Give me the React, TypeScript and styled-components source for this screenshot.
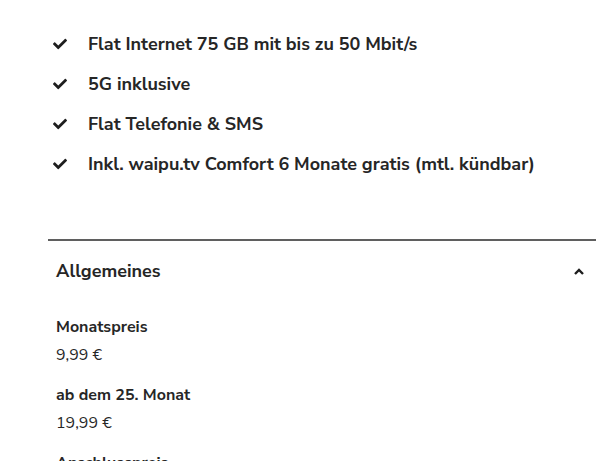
import React from "react";
import styled, { createGlobalStyle } from "styled-components";
import { FaCheck } from "react-icons/fa";

const Global = createGlobalStyle`
  html, body { margin: 0; padding: 0; background: #fff; }
  body { font-family: "Nunito Sans", Lato, "Open Sans", sans-serif; color: #262626; }
`;

const Page = styled.div`
  width: 608px;
  height: 461px;
  overflow: hidden;
  padding: 0 12px 0 48px;
  box-sizing: border-box;
`;

const List = styled.ul`
  list-style: none;
  margin: 0;
  padding: 32px 0 0 0;
  display: flex;
  flex-direction: column;
  gap: 16px;
`;

const Item = styled.li`
  display: flex;
  align-items: center;
  height: 24px;
  font-size: 18px;
  font-weight: 700;
  line-height: 24px;
  color: #262626;
`;

const Check = styled.span`
  width: 40px;
  padding-left: 5px;
  box-sizing: border-box;
  display: flex;
  align-items: center;
  color: #1e1e1e;
`;

const Section = styled.section`
  margin-top: 63px;
  border-top: 2px solid #5f5f5f;
`;

const Header = styled.div`
  display: flex;
  align-items: center;
  justify-content: space-between;
  padding: 18px 12px 0 8px;
  height: 24px;
  font-size: 18px;
  font-weight: 700;
`;

const Body = styled.dl`
  margin: 32px 0 0 8px;
  display: flex;
  flex-direction: column;
  gap: 16px;
`;

const Entry = styled.div`
  display: flex;
  flex-direction: column;
  gap: 4px;
`;

const Label = styled.dt`
  font-size: 16px;
  font-weight: 700;
  line-height: 24px;
`;

const Value = styled.dd`
  margin: 0;
  font-size: 16px;
  font-weight: 400;
  line-height: 24px;
`;

const Chevron = () => (
  <svg width="10" height="7" viewBox="0 0 10 7">
    <path d="M1 6 L5 2 L9 6" fill="none" stroke="#1e1e1e" strokeWidth="2.4" />
  </svg>
);

const features = [
  "Flat Internet 75 GB mit bis zu 50 Mbit/s",
  "5G inklusive",
  "Flat Telefonie & SMS",
  "Inkl. waipu.tv Comfort 6 Monate gratis (mtl. kündbar)",
];

const details = [
  { label: "Monatspreis", value: "9,99 €" },
  { label: "ab dem 25. Monat", value: "19,99 €" },
  { label: "Anschlusspreis", value: "0,00 €" },
];

export default function App() {
  return (
    <>
      <Global />
      <Page>
        <List>
          {features.map((f) => (
            <Item key={f}>
              <Check>
                <FaCheck size={14} />
              </Check>
              {f}
            </Item>
          ))}
        </List>
        <Section>
          <Header>
            <span>Allgemeines</span>
            <Chevron />
          </Header>
          <Body>
            {details.map((d) => (
              <Entry key={d.label}>
                <Label>{d.label}</Label>
                <Value>{d.value}</Value>
              </Entry>
            ))}
          </Body>
        </Section>
      </Page>
    </>
  );
}
